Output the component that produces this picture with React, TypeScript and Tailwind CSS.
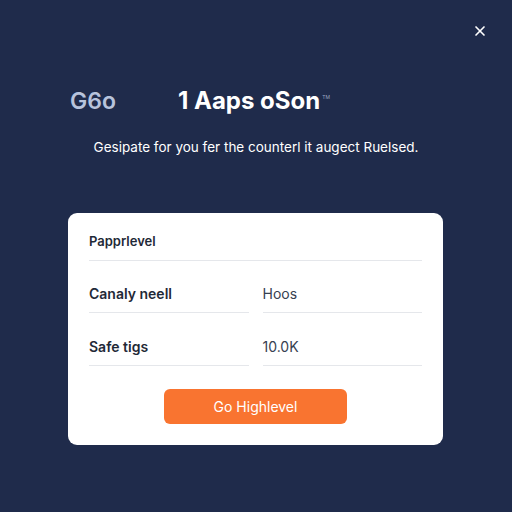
import { X } from "lucide-react";

const App = () => {
  return (
    <div
      className="w-[512px] h-[512px] bg-[#1f2b4b] flex flex-col"
      style={{ fontFamily: "Inter, 'Noto Sans', sans-serif" }}
    >
      <div className="h-[62px] flex items-center justify-end pr-[24px]">
        <button className="text-white">
          <X className="w-[16px] h-[16px]" strokeWidth={2.5} />
        </button>
      </div>

      <div className="mt-[26px] flex items-center pl-[70px] h-[26px]">
        <span className="text-[23px] font-semibold text-[#b7c3dc] leading-[26px]">G6o</span>
        <span className="ml-[62px] text-[24px] font-bold text-white leading-[26px]">1 Aaps oSon</span>
        <span className="ml-[2px] mb-[6px] text-[5px] text-[#9aa6c0]">TM</span>
      </div>

      <p className="mt-[23px] text-center text-[13.5px] text-white leading-[20px]">
        Gesipate for you fer the counterl it augect Ruelsed.
      </p>

      <div className="mt-[56px] ml-[68px] w-[375px] h-[232px] bg-white rounded-[9px] px-[21px] flex flex-col">
        <div className="pt-[18px] pb-[9px] border-b border-[#e5e7eb]">
          <div className="text-[13px] font-semibold text-[#1f2937] leading-[20px]">Papprlevel</div>
        </div>

        <div className="grid grid-cols-2 gap-x-[14px]">
          <div className="pt-[23px] pb-[8px] border-b border-[#e5e7eb]">
            <div className="text-[14px] font-semibold text-[#1f2937] leading-[20px]">Canaly neell</div>
          </div>
          <div className="pt-[23px] pb-[8px] border-b border-[#e5e7eb]">
            <div className="text-[14px] text-[#374151] leading-[20px]">Hoos</div>
          </div>
          <div className="pt-[24px] pb-[8px] border-b border-[#e5e7eb]">
            <div className="text-[14px] font-semibold text-[#1f2937] leading-[20px]">Safe tigs</div>
          </div>
          <div className="pt-[24px] pb-[8px] border-b border-[#e5e7eb]">
            <div className="text-[14px] text-[#374151] leading-[20px]">10.0K</div>
          </div>
        </div>

        <div className="mt-[23px] flex justify-center">
          <button className="w-[183px] h-[35px] bg-[#f97430] rounded-[6px] text-white text-[14px]">
            Go Highlevel
          </button>
        </div>
      </div>
    </div>
  );
};

export default App;
